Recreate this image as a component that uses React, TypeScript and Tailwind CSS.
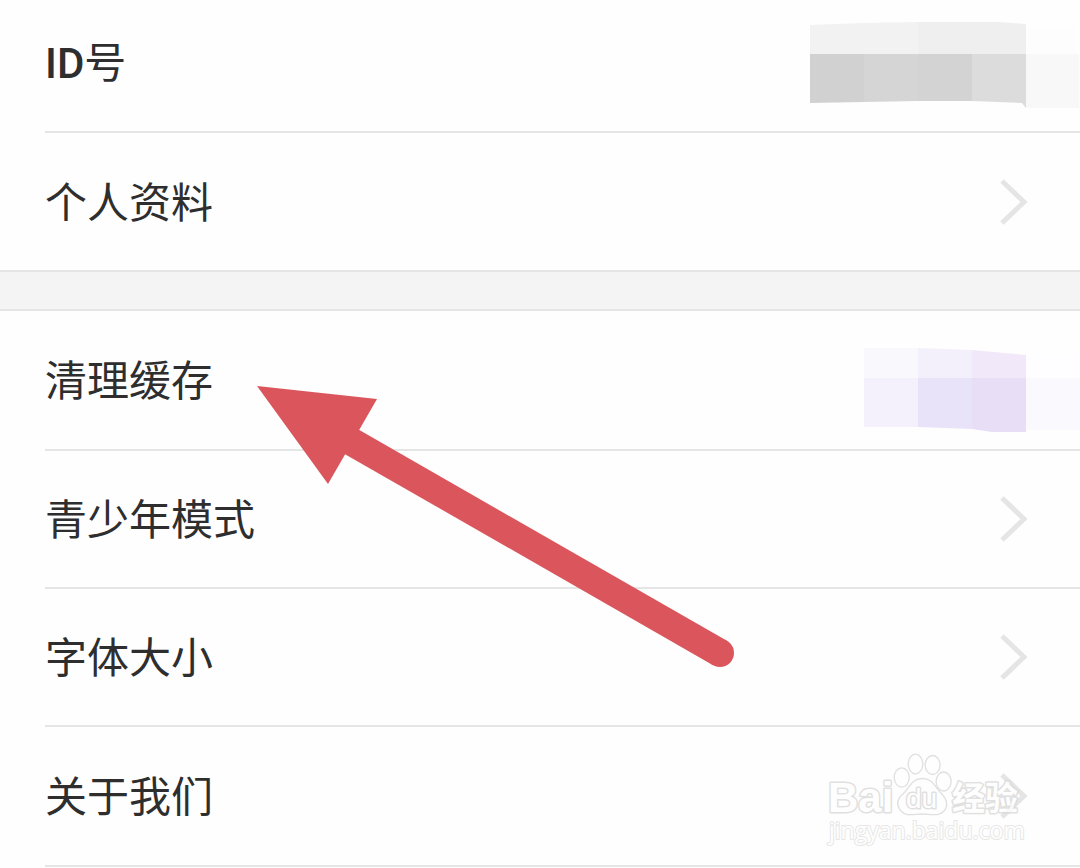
import type { ReactNode } from "react";

function Chevron() {
  return (
    <svg className="h-12 w-[30px] shrink-0" viewBox="0 0 30 48" fill="none" aria-hidden="true">
      <path d="M3 3 L25 24 L3 45" stroke="#e5e5e5" strokeWidth="5" />
    </svg>
  );
}

function IdMosaic() {
  return (
    <svg className="h-24 w-[270px] shrink-0" viewBox="0 0 270 96" aria-hidden="true">
      <rect x="216" y="12" width="50" height="30" fill="#fdfdfd" />
      <rect x="216" y="38" width="53" height="54" fill="#f8f8f8" />
      <path d="M0 9 L54 7 L108 6 V38 H0Z" fill="#f2f2f2" />
      <path d="M108 6 H190 L216 8 V38 H108Z" fill="#efefef" />
      <path d="M0 38 H54 V86 L0 87Z" fill="#d1d1d1" />
      <path d="M54 38 H108 V85 L54 86Z" fill="#d5d5d5" />
      <path d="M108 38 H162 V85 H108Z" fill="#d3d3d3" />
      <path d="M162 38 H216 V92 L212 87 L162 85Z" fill="#dcdcdc" />
    </svg>
  );
}

function CacheMosaic() {
  return (
    <svg className="h-[104px] w-[216px] shrink-0" viewBox="0 -4 216 104" aria-hidden="true">
      <rect x="162" y="22" width="54" height="26" fill="#fefdff" />
      <path d="M162 46 H216 V98 H162Z" fill="#faf9fe" />
      <path d="M0 16 H54 V46 H0Z" fill="#f9f8fd" />
      <path d="M54 16 L108 18 V46 H54Z" fill="#f4f0fb" />
      <path d="M108 18 L162 23 V46 H108Z" fill="#f1e9fa" />
      <path d="M0 46 H54 V95 H0Z" fill="#f4f1fc" />
      <path d="M54 46 H108 V97 L54 95Z" fill="#e9e3fa" />
      <path d="M108 46 H162 V100 H128 L108 97Z" fill="#e8dff7" />
    </svg>
  );
}

function Label({ children }: { children: ReactNode }) {
  return <span className="pb-1">{children}</span>;
}

function Row({ height, children }: { height: string; children: ReactNode }) {
  return (
    <li className="pl-[45px]">
      <div className={`flex border-b-2 border-[#e5e5e5] ${height}`}>{children}</div>
    </li>
  );
}

function LinkRow({ label, height = "h-[138px]" }: { label: string; height?: string }) {
  return (
    <Row height={height}>
      <button type="button" className="flex flex-1 items-center justify-between pr-[51px] text-left">
        <Label>{label}</Label>
        <Chevron />
      </button>
    </Row>
  );
}

function PointerArrow() {
  return (
    <svg
      className="pointer-events-none absolute top-[380px] left-[250px] h-[300px] w-[500px]"
      viewBox="250 380 500 300"
      aria-hidden="true"
    >
      <path d="M257 386 L377 399 L328 484Z" fill="#db565c" />
      <path d="M345 438 L720 653" stroke="#db565c" strokeWidth="28" />
      <circle cx="720" cy="653" r="14" fill="#db565c" />
    </svg>
  );
}

function Watermark() {
  return (
    <svg
      className="pointer-events-none absolute right-[50px] bottom-[22px] h-[100px] w-[210px]"
      viewBox="820 745 210 100"
      fill="#ffffff"
      stroke="#d9d9d9"
      strokeWidth="3"
      strokeLinejoin="round"
      paintOrder="stroke"
      opacity="0.8"
    >
      <text x="828" y="811" fontSize="42" fontWeight="700" fontFamily="Liberation Sans, sans-serif">Bai</text>
      <g strokeWidth="1.3" paintOrder="normal">
        <ellipse cx="901.700" cy="776.500" rx="7.500" ry="9.700" />
        <ellipse cx="915.500" cy="763" rx="7.300" ry="9.800" />
        <ellipse cx="932.600" cy="764" rx="7.500" ry="9.500" />
        <ellipse cx="943.600" cy="780.500" rx="7.500" ry="9.500" />
        <path d="M922 777.500 C911 777.500 910 787 903 793 C897 798 896 804 901 810 C906 816 914 813 922 813 C930 813 939 816 944 810 C949 804 946 797 940 791 C934 785 933 777.500 922 777.500Z" />
      </g>
      <text x="906" y="807" fontSize="28" fontFamily="Liberation Sans, sans-serif">du</text>
      <text x="952" y="809" fontSize="33" fontWeight="700" fontFamily="Noto Sans CJK SC, sans-serif">经验</text>
      <text x="829" y="838" fontSize="23" strokeWidth="2" stroke="#e2e2e2" fontFamily="Open Sans, sans-serif">jingyan.baidu.com</text>
    </svg>
  );
}

export default function App() {
  return (
    <main
      className="relative w-full overflow-hidden bg-[#fefefe] pb-px text-[42px] leading-[60px] text-[#2e2e2e]"
      style={{ fontFamily: '"Noto Sans CJK SC", sans-serif' }}
    >
      <ul>
        <Row height="h-[133px]">
          <div className="flex flex-1 items-center justify-between pb-1">
            <Label>
              <span className="font-[family-name:Roboto] font-medium">ID</span>号
            </Label>
            <IdMosaic />
          </div>
        </Row>
        <li className="pl-[45px]">
          <button type="button" className="flex h-[137px] w-full items-center justify-between pr-[51px] text-left">
            <Label>个人资料</Label>
            <Chevron />
          </button>
        </li>
      </ul>
      <div className="h-[41px] border-y-2 border-[#e5e5e5] bg-[#f4f4f4]" />
      <ul>
        <Row height="h-[140px]">
          <button type="button" className="flex flex-1 items-center justify-between text-left">
            <Label>清理缓存</Label>
            <CacheMosaic />
          </button>
        </Row>
        <LinkRow label="青少年模式" />
        <LinkRow label="字体大小" />
        <LinkRow label="关于我们" height="h-[140px]" />
      </ul>
      <PointerArrow />
      <Watermark />
    </main>
  );
}
